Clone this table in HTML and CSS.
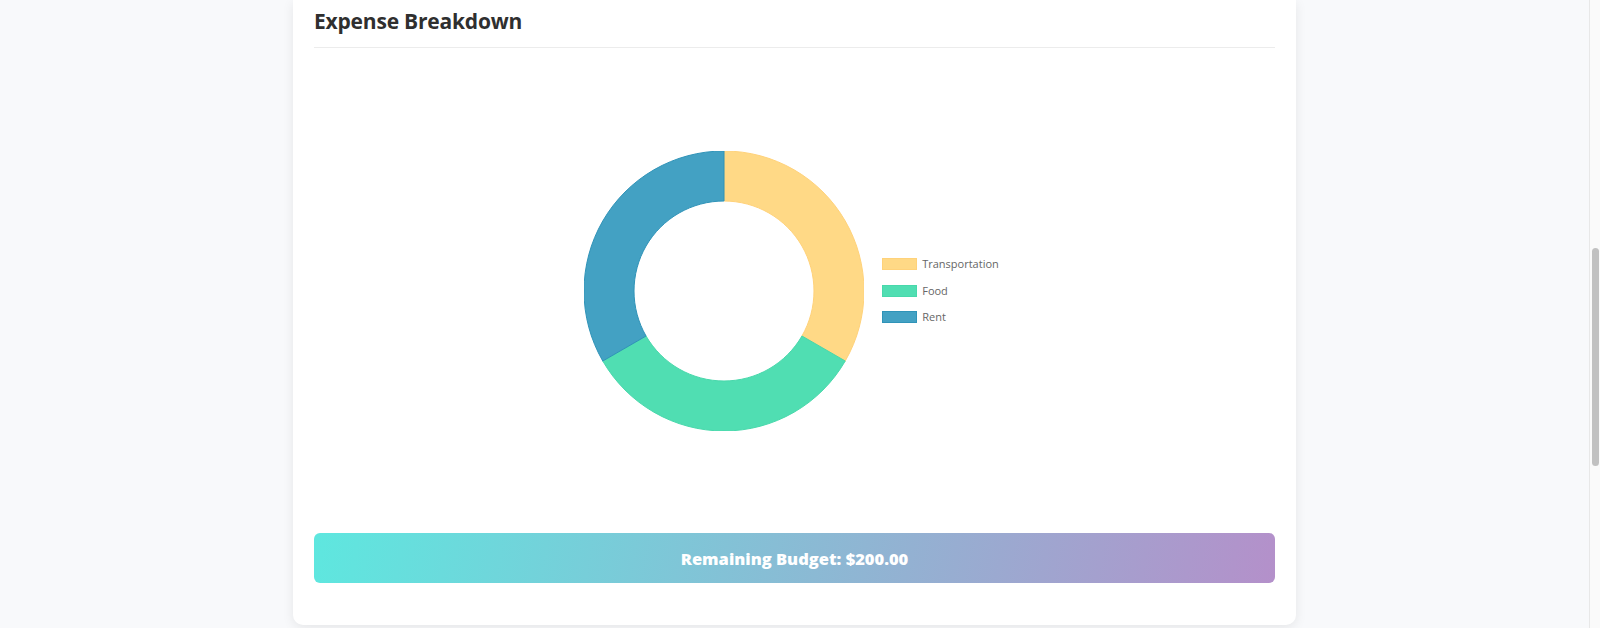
FILE: index.html
```html
<!DOCTYPE html>
<html lang="en">
<head>
<meta charset="utf-8">
<title>Expense Breakdown</title>
<link rel="stylesheet" href="styles.css">
</head>
<body>
<main class="page">
  <section class="card">
    <h2 class="card-title">Expense Breakdown</h2>
    <div class="chart-area">
      <div class="chart-row">
        <svg class="donut" width="280" height="280" viewBox="0 0 280 280" aria-label="Expense breakdown chart">
          <path class="seg seg-transport" d="M140 0 A140 140 0 0 1 261.24 210 L217.94 185 A90 90 0 0 0 140 50 Z"/>
          <path class="seg seg-food" d="M261.24 210 A140 140 0 0 1 18.76 210 L62.06 185 A90 90 0 0 0 217.94 185 Z"/>
          <path class="seg seg-rent" d="M18.76 210 A140 140 0 0 1 140 0 L140 50 A90 90 0 0 0 62.06 185 Z"/>
        </svg>
        <ul class="legend">
          <li class="legend-item"><span class="swatch swatch-transport"></span>Transportation</li>
          <li class="legend-item"><span class="swatch swatch-food"></span>Food</li>
          <li class="legend-item"><span class="swatch swatch-rent"></span>Rent</li>
        </ul>
      </div>
    </div>
    <div class="remaining">Remaining Budget: $200.00</div>
  </section>
</main>
<div class="scrollbar"><div class="scrollbar-thumb"></div></div>
</body>
</html>
```
FILE: styles.css
```css
* { box-sizing: border-box; }
html, body {
  margin: 0;
  height: 100%;
  overflow: hidden;
}
body {
  background: #f8f9fb;
  font-family: "Open Sans", "Liberation Sans", sans-serif;
  padding-right: 11px;
}
.page {
  display: flex;
  justify-content: center;
}
.card {
  width: 1003px;
  background: #ffffff;
  border-radius: 0 0 10px 10px;
  box-shadow: 0 3px 12px rgba(0, 0, 0, 0.08);
  padding: 5px 21px 42px 21px;
}
.card-title {
  margin: 0;
  font-size: 21px;
  line-height: 32px;
  font-weight: 700;
  letter-spacing: -0.2px;
  color: #2f2f2f;
  padding-bottom: 10px;
  border-bottom: 1px solid #ececec;
}
.chart-area {
  height: 485px;
  display: flex;
  align-items: center;
  justify-content: center;
}
.chart-row {
  display: flex;
  align-items: center;
  gap: 18px;
  padding-right: 6px;
}
.donut { display: block; }
.seg { stroke-width: 1; }
.seg-transport { fill: #ffd986; stroke: #ffd27a; }
.seg-food { fill: #50deb2; stroke: #48d8ab; }
.seg-rent { fill: #43a1c3; stroke: #2f93b8; }
.legend {
  list-style: none;
  margin: 0;
  padding: 0;
  display: flex;
  flex-direction: column;
  gap: 14.5px;
}
.legend-item {
  display: flex;
  align-items: center;
  gap: 5px;
  font-size: 11px;
  line-height: 12px;
  color: #666666;
}
.swatch {
  width: 35px;
  height: 12px;
  display: block;
}
.swatch-transport { background: #ffd986; border: 1px solid #ffd27a; }
.swatch-food { background: #50deb2; border: 1px solid #48d8ab; }
.swatch-rent { background: #43a1c3; border: 1px solid #2f93b8; }
.remaining {
  height: 50px;
  border-radius: 6px;
  background: linear-gradient(100deg, #5ee7df 0%, #b490ca 100%);
  color: #ffffff;
  font-weight: 800;
  font-size: 16.5px;
  display: flex;
  align-items: center;
  justify-content: center;
}
.scrollbar {
  position: fixed;
  top: 0;
  right: 0;
  width: 11px;
  height: 100%;
  background: #fafafa;
  border-left: 1px solid #e8e8e8;
}
.scrollbar-thumb {
  margin: 248px 0 0 2px;
  width: 7px;
  height: 218px;
  border-radius: 4px;
  background: #c1c1c1;
}
```
